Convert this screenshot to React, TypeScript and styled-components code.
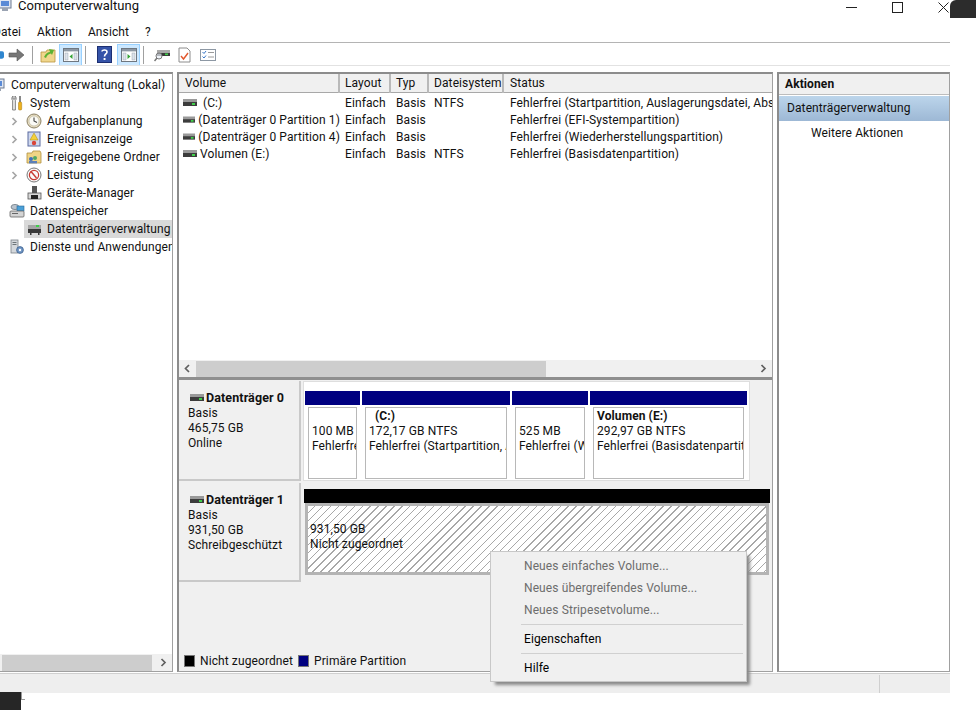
import React from "react";
import styled, { createGlobalStyle } from "styled-components";

const GlobalStyle = createGlobalStyle`
  html, body {
    margin: 0;
    padding: 0;
    width: 976px;
    height: 710px;
    overflow: hidden;
    background: #fff;
  }
  body {
    font-family: Roboto, "Noto Sans", "Liberation Sans", sans-serif;
    font-size: 12px;
    color: #111;
    letter-spacing: 0.1px;
  }
`;

const Page = styled.div`
  position: relative;
  width: 976px;
  height: 710px;
  overflow: hidden;
`;

/* window is a bit off-screen on the left and on the top */
const Shell = styled.div`
  width: 958px;
  margin-left: -8px;
  margin-top: -8px;
  display: flex;
  flex-direction: column;
`;

const TitleBar = styled.div`
  height: 30px;
  display: flex;
  align-items: center;
  padding-left: 5px;
  font-size: 13px;
  letter-spacing: 0;
  padding-bottom: 4px;
  box-sizing: border-box;
`;

const TitleText = styled.span`
  margin-left: 5px;
  flex: 1;
`;

const WinControls = styled.div`
  display: flex;
  gap: 35px;
  padding-right: 1px;
  margin-top: 4px;
`;

const MenuBar = styled.div`
  height: 21px;
  box-sizing: border-box;
  border-bottom: 1px solid #b4b4b4;
  display: flex;
  gap: 16px;
  align-items: center;
  padding-left: 1px;
`;

const Toolbar = styled.div`
  height: 22px;
  padding: 1px 0 0 0;
  box-sizing: border-box;
  display: flex;
  align-items: center;
  border-bottom: 0;
`;

const ToolBtn = styled.div<{ $active?: boolean; $w?: number }>`
  width: ${(p) => p.$w ?? 23}px;
  height: 22px;
  box-sizing: border-box;
  display: flex;
  align-items: center;
  justify-content: center;
  background: ${(p) => (p.$active ? "#cce8ff" : "transparent")};
  border: 1px solid ${(p) => (p.$active ? "#99d1ff" : "transparent")};
`;

const ToolSep = styled.div`
  width: 1px;
  height: 18px;
  background: #a0a0a0;
  margin: 0 3px;
`;

const ToolGap = styled.div<{ $w: number }>`
  width: ${(p) => p.$w}px;
`;

const Spacer = styled.div`
  height: 7px;
  border-top: 1px solid #e2e2e2;
  box-sizing: border-box;
`;

const Main = styled.div`
  height: 600px;
  display: grid;
  grid-template-columns: 181px 596px 173px;
  column-gap: 4px;
`;

const Pane = styled.div`
  box-sizing: border-box;
  border-top: 2px solid #8c8c8c;
  border-left: 2px solid #8c8c8c;
  border-right: 1px solid #a0a0a0;
  border-bottom: 1px solid #a0a0a0;
  overflow: hidden;
  min-width: 0;
  position: relative;
  display: flex;
  flex-direction: column;
`;

const TreeList = styled.div`
  flex: 1;
  padding-top: 2px;
  min-height: 0;
`;

const TreeRow = styled.div<{ $indent: number }>`
  height: 18px;
  display: flex;
  align-items: center;
  margin-left: ${(p) => p.$indent}px;
  white-space: nowrap;
`;

const Twisty = styled.div`
  width: 30px;
  flex: none;
  padding-left: 17px;
  box-sizing: border-box;
  display: flex;
  align-items: center;
`;

const TreeBody = styled.div<{ $selected?: boolean }>`
  flex: 1;
  height: 18px;
  display: flex;
  align-items: center;
  gap: 3px;
  background: ${(p) => (p.$selected ? "#d9d9d9" : "transparent")};
`;

const IconSlot = styled.span`
  width: 20px;
  flex: none;
  display: flex;
  justify-content: center;
`;

const HScroll = styled.div`
  height: 17px;
  flex: none;
  background: #f0f0f0;
  display: flex;
  align-items: center;
`;

const ScrollArrow = styled.div`
  width: 17px;
  height: 17px;
  flex: none;
  display: flex;
  align-items: center;
  justify-content: center;
`;

const ScrollTrack = styled.div`
  flex: 1;
  height: 16px;
  display: flex;
`;

const ScrollThumb = styled.div<{ $w: number; $off?: number }>`
  width: ${(p) => p.$w}px;
  margin-left: ${(p) => p.$off ?? 0}px;
  background: #cdcdcd;
`;

const ListArea = styled.div`
  height: 303px;
  flex: none;
  display: flex;
  flex-direction: column;
  background: #fff;
  border-bottom: 3px solid #8f8f8f;
  box-sizing: content-box;
`;

const COLUMNS = "161px 51px 38px 75px 1fr";

const ListHead = styled.div`
  display: grid;
  grid-template-columns: ${COLUMNS};
  height: 18px;
  flex: none;
  background: #f0f0f0;
  border-bottom: 1px solid #a8a8a8;
  box-sizing: content-box;
`;

const HeadCell = styled.div`
  padding-left: 5px;
  line-height: 19px;
  border-right: 2px solid #b9b9b9;
  box-sizing: border-box;
  &:first-child {
    padding-left: 6px;
  }
  &:last-child {
    border-right: 0;
    padding-left: 6px;
  }
`;

const ListBody = styled.div`
  flex: 1;
  padding-top: 1px;
`;

const ListRow = styled.div`
  display: grid;
  grid-template-columns: ${COLUMNS};
  height: 17px;
  align-items: center;
`;

const Cell = styled.div`
  padding-left: 5px;
  white-space: nowrap;
  overflow: hidden;
  &:last-child {
    padding-left: 6px;
  }
`;

const VolumeCell = styled.div<{ $gap: number }>`
  padding-left: 4px;
  display: flex;
  align-items: center;
  gap: ${(p) => p.$gap}px;
  white-space: nowrap;
`;

const DiskArea = styled.div`
  flex: 1;
  background: #f0f0f0;
  display: flex;
  flex-direction: column;
  min-height: 0;
`;

const DiskRows = styled.div`
  flex: 1;
  display: flex;
  flex-direction: column;
  gap: 2px;
  padding-top: 1px;
`;

const DiskRow = styled.div<{ $h: number }>`
  height: ${(p) => p.$h}px;
  display: flex;
  flex: none;
`;

const DiskLabel = styled.div`
  width: 122px;
  flex: none;
  box-sizing: border-box;
  padding: 9px 0 0 9px;
  line-height: 15px;
  background: #f0f0f0;
  border-right: 2px solid #c9c9c9;
  border-bottom: 2px solid #c9c9c9;
`;

const DiskName = styled.div`
  font-weight: 700;
  font-size: 12.5px;
  display: flex;
  align-items: center;
  gap: 2px;
  margin-left: 2px;
  height: 15px;
  margin-bottom: 1px;
`;

const DiskTrack = styled.div`
  width: 447px;
  flex: none;
  margin-left: 2px;
  box-sizing: border-box;
  padding: 9px 3px 0 1px;
  background: #fff;
  border: 1px solid #dedede;
  display: flex;
  gap: 2px;
`;

const PartCol = styled.div<{ $w: number }>`
  width: ${(p) => p.$w}px;
  flex: none;
  display: flex;
  flex-direction: column;
`;

const PartHead = styled.div<{ $color: string }>`
  height: 14px;
  flex: none;
  background: ${(p) => p.$color};
`;

const PartBox = styled.div`
  flex: 1;
  margin: 2px 3px 1px 3px;
  border: 1px solid #b8b8b8;
  padding: 1px 3px 0 3px;
  line-height: 15px;
  white-space: nowrap;
  overflow: hidden;
`;

const PartTitle = styled.div<{ $indent?: number }>`
  font-weight: 700;
  height: 15px;
  padding-left: ${(p) => p.$indent ?? 0}px;
`;

const EmptyTrack = styled.div`
  width: 466px;
  flex: none;
  margin-left: 3px;
  padding-top: 6px;
  display: flex;
  flex-direction: column;
`;

const HatchBox = styled.div`
  height: 72px;
  box-sizing: border-box;
  margin: 0 1px;
  border: 3px solid #b4b4b4;
  padding: 16px 0 0 2px;
  line-height: 15px;
  background: repeating-linear-gradient(
    135deg,
    #fff 0,
    #fff 4.6px,
    #a8a8a8 4.6px,
    #a8a8a8 5.6px
  );
`;

const Legend = styled.div`
  height: 18px;
  flex: none;
  display: flex;
  align-items: center;
  padding-left: 5px;
  margin-bottom: 1px;
`;

const LegendSwatch = styled.span<{ $color: string }>`
  width: 11px;
  height: 12px;
  background: ${(p) => p.$color};
  border: 1px solid #777;
  box-sizing: border-box;
  margin-right: 5px;
`;

const LegendText = styled.span`
  margin-right: 5px;
`;

const ActionHead = styled.div`
  height: 20px;
  line-height: 21px;
  padding-left: 6px;
  font-weight: 700;
  background: #f0f0f0;
  border-bottom: 1px solid #bdbdbd;
  flex: none;
`;

const ActionTitle = styled.div`
  height: 25px;
  line-height: 25px;
  padding-left: 8px;
  margin-top: 1px;
  background: linear-gradient(#bcd5eb, #9db8d5);
  flex: none;
`;

const ActionItem = styled.div`
  padding-left: 32px;
  line-height: 24px;
`;

const StatusBar = styled.div`
  height: 20px;
  background: #eeeeee;
  border-top: 1px solid #cfcfcf;
  box-sizing: border-box;
  margin-top: 1px;
  display: flex;
  justify-content: flex-end;
`;

const StatusCell = styled.div`
  width: 70px;
  margin-top: 1px;
  border-left: 1px solid #cfcfcf;
`;

const ContextMenu = styled.div`
  position: absolute;
  left: 490px;
  top: 551px;
  width: 257px;
  height: 131px;
  box-sizing: border-box;
  padding-top: 3px;
  background: #f0f0f0;
  border: 1px solid #c8c8c8;
  box-shadow: 4px 4px 3px -1px #8a8a8a;
`;

const MenuEntry = styled.div<{ $disabled?: boolean }>`
  height: 22px;
  line-height: 22px;
  padding-left: 33px;
  color: ${(p) => (p.$disabled ? "#6d6d6d" : "#000")};
`;

const MenuSep = styled.div`
  height: 1px;
  background: #d0d0d0;
  margin: 3px 3px 3px 30px;
`;

const DarkCorner = styled.div`
  position: absolute;
  right: 0;
  top: 0;
  width: 26px;
  height: 18px;
  background: #2c2c2c;
  border-top-left-radius: 6px;
`;

const DarkStub = styled.div`
  position: absolute;
  left: 0;
  bottom: 0;
  width: 21px;
  height: 18px;
  background: #262626;
  &::after {
    content: "";
    position: absolute;
    left: 21px;
    top: 0;
    width: 4px;
    height: 8px;
    border-left: 1px solid #999;
    border-bottom: 1px solid #999;
    box-sizing: border-box;
  }
`;

/* ---- drawn icons ---- */

const DriveIcon = ({ w = 14 }: { w?: number }) => (
  <svg width={w} height="8" viewBox="0 0 14 8">
    <rect x="0" y="0" width="14" height="3" fill="#9a9a9a" />
    <rect x="0" y="3" width="14" height="4" fill="#3c3c3c" />
    <rect x="9" y="4" width="3" height="2" fill="#3fd04a" />
  </svg>
);

const Chevron = ({ right = true, color = "#8a8a8a" }: { right?: boolean; color?: string }) => (
  <svg width="7" height="9" viewBox="0 0 7 9">
    <path
      d={right ? "M1.5 1 L5 4.5 L1.5 8" : "M5 1 L1.5 4.5 L5 8"}
      fill="none"
      stroke={color}
      strokeWidth="1.7"
    />
  </svg>
);

const ComputerIcon = () => (
  <svg width="16" height="16" viewBox="0 0 16 16">
    <rect x="2" y="2" width="12" height="9" fill="#dfe6f2" stroke="#6d7a90" />
    <rect x="4" y="4" width="8" height="5" fill="#5a8ad6" />
    <rect x="5" y="11" width="6" height="3" fill="#9aa3b2" />
  </svg>
);

const ToolsIcon = () => (
  <svg width="16" height="16" viewBox="0 0 16 16">
    <path d="M4 1 L4 4 L6 4 L6 1 C8 3 7 5 6.4 5.6 L6.4 15 L3.6 15 L3.6 5.6 C3 5 2 3 4 1Z" fill="#e8e8e8" stroke="#6b6b6b" strokeWidth="0.8" />
    <rect x="10" y="1" width="2" height="6" fill="#888" />
    <rect x="9.5" y="7" width="3.2" height="8" rx="1" fill="#eeb21f" stroke="#a87a10" strokeWidth="0.5" />
  </svg>
);

const ClockIcon = () => (
  <svg width="16" height="16" viewBox="0 0 16 16">
    <circle cx="8" cy="8" r="7" fill="#e6dcc0" stroke="#8c8266" />
    <circle cx="8" cy="8" r="5" fill="#fbfbf6" stroke="#b9b299" strokeWidth="0.6" />
    <path d="M8 4.5 L8 8 L11 9.5" fill="none" stroke="#444" strokeWidth="1.1" />
  </svg>
);

const LogIcon = () => (
  <svg width="16" height="16" viewBox="0 0 16 16">
    <rect x="2" y="1" width="12" height="14" fill="#cfd8ee" stroke="#5b6aa0" />
    <path d="M8 2 L12 9 L4 9Z" fill="#f4d03a" stroke="#a98a10" strokeWidth="0.5" />
    <circle cx="8" cy="12" r="2.2" fill="#d9453a" />
  </svg>
);

const SharedIcon = () => (
  <svg width="16" height="16" viewBox="0 0 16 16">
    <path d="M1 4 L6 4 L7 2 L14 2 L15 4 L15 14 L1 14Z" fill="#f0d486" stroke="#b09040" strokeWidth="0.8" />
    <circle cx="5" cy="10" r="2" fill="#3f6fc0" />
    <circle cx="9" cy="9" r="2" fill="#4fa866" />
    <rect x="3" y="12" width="8" height="2.4" fill="#5b7fb8" />
  </svg>
);

const GaugeIcon = () => (
  <svg width="16" height="16" viewBox="0 0 16 16">
    <circle cx="8" cy="8" r="7" fill="#fafafa" stroke="#777" />
    <circle cx="8" cy="8" r="4.6" fill="none" stroke="#c83a32" strokeWidth="1.2" />
    <path d="M5 4.5 L10.5 11" stroke="#c83a32" strokeWidth="1.4" />
  </svg>
);

const DeviceIcon = () => (
  <svg width="16" height="16" viewBox="0 0 16 16">
    <rect x="6" y="1" width="5" height="7" fill="#555" />
    <rect x="2" y="8" width="13" height="6" fill="#d8d8d8" stroke="#555" strokeWidth="0.8" />
    <rect x="5" y="10" width="7" height="4" fill="#222" />
  </svg>
);

const StorageIcon = () => (
  <svg width="16" height="16" viewBox="0 0 16 16">
    <ellipse cx="6" cy="4" rx="4" ry="2.6" fill="#b9c2cc" stroke="#5f6b75" strokeWidth="0.7" />
    <rect x="8" y="3" width="7" height="5" fill="#4aa0d8" stroke="#2b6a98" strokeWidth="0.6" />
    <rect x="1" y="8" width="14" height="6" rx="1" fill="#d4d4d4" stroke="#666" strokeWidth="0.8" />
    <rect x="3" y="10" width="6" height="1" fill="#666" />
  </svg>
);

const DiskToolIcon = () => (
  <svg width="16" height="16" viewBox="0 0 16 16">
    <rect x="2" y="4" width="13" height="4" fill="#a5a5a5" />
    <rect x="2" y="8" width="13" height="4" fill="#3a3a3a" />
    <rect x="10" y="4" width="3" height="2" fill="#3fd04a" />
    <rect x="4" y="12" width="1.5" height="2" fill="#3a3a3a" />
    <rect x="12" y="12" width="1.5" height="2" fill="#3a3a3a" />
  </svg>
);

const ServicesIcon = () => (
  <svg width="16" height="16" viewBox="0 0 16 16">
    <rect x="2" y="1" width="7" height="13" fill="#d4d8dc" stroke="#7b8288" strokeWidth="0.8" />
    <rect x="3.5" y="3" width="4" height="1" fill="#6c7478" />
    <rect x="3.5" y="5" width="4" height="1" fill="#6c7478" />
    <circle cx="11" cy="11" r="3.4" fill="#6f95c4" stroke="#3f628e" strokeWidth="0.8" />
    <circle cx="11" cy="11" r="1.2" fill="#fff" />
  </svg>
);

const BackIcon = () => (
  <svg width="17" height="14" viewBox="0 0 17 14">
    <path d="M1 5 L9 5 L9 1 L16 7 L9 13 L9 9 L1 9Z" fill="#777" stroke="#555" strokeWidth="0.6" />
  </svg>
);

const UpFolderIcon = () => (
  <svg width="16" height="16" viewBox="0 0 16 16">
    <path d="M1 5 L6 5 L7 3 L15 3 L15 15 L1 15Z" fill="#f0d68c" stroke="#b9963f" strokeWidth="0.8" />
    <path d="M4 10 C6 6 8 5 10 5 L9 2 L14 3 L12 8 L11 6.5 C9 7 7 8 6 11Z" fill="#5cb233" />
  </svg>
);

const PanelIcon = ({ side }: { side: "left" | "right" }) => (
  <svg width="16" height="14" viewBox="0 0 16 14">
    <rect x="0.5" y="0.5" width="15" height="13" fill="#fff" stroke="#6f7780" />
    <rect x="1" y="1" width="14" height="2.4" fill="#8d98a4" />
    <rect x="2" y="5" width="3" height="7" fill="#dde3ea" stroke="#8d98a4" strokeWidth="0.4" />
    <rect x="11" y="5" width="3" height="7" fill="#dde3ea" stroke="#8d98a4" strokeWidth="0.4" />
    <path
      d={side === "left" ? "M9.5 6 L6.5 8.5 L9.5 11Z" : "M6.5 6 L9.5 8.5 L6.5 11Z"}
      fill="#36a336"
    />
  </svg>
);

const HelpIcon = () => (
  <svg width="15" height="17" viewBox="0 0 15 17">
    <rect x="0.5" y="0.5" width="14" height="16" fill="#3553a8" stroke="#1c2f72" />
    <path d="M5 5.5 C5 3.5 10 3.5 10 6 C10 8 7.5 8 7.5 10.5" fill="none" stroke="#fff" strokeWidth="1.6" />
    <rect x="6.6" y="12" width="1.9" height="2" fill="#fff" />
  </svg>
);

const ScanIcon = () => (
  <svg width="16" height="15" viewBox="0 0 16 15">
    <rect x="3" y="3" width="13" height="3" fill="#a8a8a8" />
    <rect x="3" y="6" width="13" height="3" fill="#3a3a3a" />
    <rect x="11" y="6.5" width="3" height="1.6" fill="#3fd04a" />
    <circle cx="5" cy="9" r="3" fill="#e8eef6" fillOpacity="0.7" stroke="#777" />
    <path d="M3 11 L0.5 14" stroke="#777" strokeWidth="1.5" />
  </svg>
);

const CheckDocIcon = () => (
  <svg width="13" height="16" viewBox="0 0 13 16">
    <path d="M1 1 L9 1 L12 4 L12 15 L1 15Z" fill="#fff" stroke="#8c8c8c" />
    <path d="M3 9 L5.5 12 L10 6" fill="none" stroke="#e2572c" strokeWidth="1.4" />
  </svg>
);

const ChecklistIcon = () => (
  <svg width="16" height="12" viewBox="0 0 16 12">
    <rect x="0.5" y="0.5" width="15" height="11" fill="#fff" stroke="#8d98a4" />
    <path d="M2.5 3 L4 4.5 L6 2" fill="none" stroke="#3a78c8" strokeWidth="1" />
    <path d="M2.5 7.5 L4 9 L6 6.5" fill="none" stroke="#3a78c8" strokeWidth="1" />
    <path d="M8 3.5 L14 3.5 M8 8 L14 8" stroke="#9a9a9a" />
  </svg>
);

/* ---- data ---- */

type TreeEntry = {
  label: string;
  indent: number;
  icon: React.ReactNode;
  twisty?: "arrow" | "blank";
  selected?: boolean;
};

const treeEntries: TreeEntry[] = [
  { label: "Computerverwaltung (Lokal)", indent: -6, icon: <ComputerIcon /> },
  { label: "System", indent: 13, icon: <ToolsIcon /> },
  { label: "Aufgabenplanung", indent: 0, icon: <ClockIcon />, twisty: "arrow" },
  { label: "Ereignisanzeige", indent: 0, icon: <LogIcon />, twisty: "arrow" },
  { label: "Freigegebene Ordner", indent: 0, icon: <SharedIcon />, twisty: "arrow" },
  { label: "Leistung", indent: 0, icon: <GaugeIcon />, twisty: "arrow" },
  { label: "Geräte-Manager", indent: 0, icon: <DeviceIcon />, twisty: "blank" },
  { label: "Datenspeicher", indent: 13, icon: <StorageIcon /> },
  { label: "Datenträgerverwaltung", indent: 0, icon: <DiskToolIcon />, twisty: "blank", selected: true },
  { label: "Dienste und Anwendungen", indent: 13, icon: <ServicesIcon /> },
];

const volumes = [
  { name: "(C:)", gap: 6, fs: "NTFS", status: "Fehlerfrei (Startpartition, Auslagerungsdatei, Absturzabbild)" },
  { name: "(Datenträger 0 Partition 1)", gap: 3, fs: "", status: "Fehlerfrei (EFI-Systempartition)" },
  { name: "(Datenträger 0 Partition 4)", gap: 3, fs: "", status: "Fehlerfrei (Wiederherstellungspartition)" },
  { name: "Volumen (E:)", gap: 3, fs: "NTFS", status: "Fehlerfrei (Basisdatenpartition)" },
];

const partitions = [
  { w: 55, title: "", indent: 0, size: "100 MB", state: "Fehlerfrei (EFI-Systempartition)" },
  { w: 148, title: "(C:)", indent: 6, size: "172,17 GB NTFS", state: "Fehlerfrei (Startpartition, Auslagerungsdatei)" },
  { w: 76, title: "", indent: 0, size: "525 MB", state: "Fehlerfrei (Wiederherstellung)" },
  { w: 157, title: "Volumen  (E:)", indent: 0, size: "292,97 GB NTFS", state: "Fehlerfrei (Basisdatenpartition)" },
];

const App = () => {
  return (
    <Page>
      <GlobalStyle />
      <Shell>
        <TitleBar>
          <ComputerIcon />
          <TitleText>Computerverwaltung</TitleText>
          <WinControls>
            <svg width="11" height="11" viewBox="0 0 11 11">
              <path d="M0 5.5 L11 5.5" stroke="#222" />
            </svg>
            <svg width="11" height="11" viewBox="0 0 11 11">
              <rect x="0.5" y="0.5" width="10" height="10" fill="none" stroke="#222" />
            </svg>
            <svg width="11" height="11" viewBox="0 0 11 11">
              <path d="M0.5 0.5 L10.5 10.5 M10.5 0.5 L0.5 10.5" stroke="#222" />
            </svg>
          </WinControls>
        </TitleBar>

        <MenuBar>
          <span>Datei</span>
          <span>Aktion</span>
          <span>Ansicht</span>
          <span>?</span>
        </MenuBar>

        <Toolbar>
          <ToolBtn $w={13}>
            <svg width="12" height="8" viewBox="0 0 12 8">
              <rect width="12" height="8" rx="2" fill="#2f86cf" />
            </svg>
          </ToolBtn>
          <ToolBtn $w={22}>
            <BackIcon />
          </ToolBtn>
          <ToolGap $w={2} />
          <ToolSep />
          <ToolBtn>
            <UpFolderIcon />
          </ToolBtn>
          <ToolBtn $active>
            <PanelIcon side="left" />
          </ToolBtn>
          <ToolSep />
          <ToolGap $w={4} />
          <ToolBtn>
            <HelpIcon />
          </ToolBtn>
          <ToolGap $w={1} />
          <ToolBtn $active>
            <PanelIcon side="right" />
          </ToolBtn>
          <ToolSep />
          <ToolGap $w={3} />
          <ToolBtn>
            <ScanIcon />
          </ToolBtn>
          <ToolBtn>
            <CheckDocIcon />
          </ToolBtn>
          <ToolBtn>
            <ChecklistIcon />
          </ToolBtn>
        </Toolbar>

        <Spacer />

        <Main>
          <Pane>
            <TreeList>
              {treeEntries.map((e) => (
                <TreeRow key={e.label} $indent={e.indent}>
                  {e.twisty && <Twisty>{e.twisty === "arrow" && <Chevron color="#a6a6a6" />}</Twisty>}
                  <TreeBody $selected={e.selected}>
                    <IconSlot>{e.icon}</IconSlot>
                    <span>{e.label}</span>
                  </TreeBody>
                </TreeRow>
              ))}
            </TreeList>
            <HScroll>
              <ScrollTrack>
                <ScrollThumb $w={150} $off={8} />
              </ScrollTrack>
              <ScrollArrow>
                <Chevron color="#606060" />
              </ScrollArrow>
            </HScroll>
          </Pane>

          <Pane>
            <ListArea>
              <ListHead>
                <HeadCell>Volume</HeadCell>
                <HeadCell>Layout</HeadCell>
                <HeadCell>Typ</HeadCell>
                <HeadCell>Dateisystem</HeadCell>
                <HeadCell>Status</HeadCell>
              </ListHead>
              <ListBody>
                {volumes.map((v) => (
                  <ListRow key={v.name}>
                    <VolumeCell $gap={v.gap}>
                      <DriveIcon />
                      <span>{v.name}</span>
                    </VolumeCell>
                    <Cell>Einfach</Cell>
                    <Cell>Basis</Cell>
                    <Cell>{v.fs}</Cell>
                    <Cell>{v.status}</Cell>
                  </ListRow>
                ))}
              </ListBody>
              <HScroll>
                <ScrollArrow>
                  <Chevron right={false} color="#606060" />
                </ScrollArrow>
                <ScrollTrack>
                  <ScrollThumb $w={350} />
                </ScrollTrack>
                <ScrollArrow>
                  <Chevron color="#606060" />
                </ScrollArrow>
              </HScroll>
            </ListArea>

            <DiskArea>
              <DiskRows>
                <DiskRow $h={100}>
                  <DiskLabel>
                    <DiskName>
                      <DriveIcon />
                      Datenträger 0
                    </DiskName>
                    <div>Basis</div>
                    <div>465,75 GB</div>
                    <div>Online</div>
                  </DiskLabel>
                  <DiskTrack>
                    {partitions.map((p) => (
                      <PartCol key={p.size} $w={p.w}>
                        <PartHead $color="#000080" />
                        <PartBox>
                          <PartTitle $indent={p.indent}>{p.title}</PartTitle>
                          <div>{p.size}</div>
                          <div>{p.state}</div>
                        </PartBox>
                      </PartCol>
                    ))}
                  </DiskTrack>
                </DiskRow>
                <DiskRow $h={99}>
                  <DiskLabel>
                    <DiskName>
                      <DriveIcon />
                      Datenträger 1
                    </DiskName>
                    <div>Basis</div>
                    <div>931,50 GB</div>
                    <div>Schreibgeschützt</div>
                  </DiskLabel>
                  <EmptyTrack>
                    <PartHead $color="#000" />
                    <HatchBox>
                      <div>931,50 GB</div>
                      <div>Nicht zugeordnet</div>
                    </HatchBox>
                  </EmptyTrack>
                </DiskRow>
              </DiskRows>
              <Legend>
                <LegendSwatch $color="#000" />
                <LegendText>Nicht zugeordnet</LegendText>
                <LegendSwatch $color="#000080" />
                <LegendText>Primäre Partition</LegendText>
              </Legend>
            </DiskArea>
          </Pane>

          <Pane>
            <ActionHead>Aktionen</ActionHead>
            <ActionTitle>Datenträgerverwaltung</ActionTitle>
            <ActionItem>Weitere Aktionen</ActionItem>
          </Pane>
        </Main>

        <StatusBar>
          <StatusCell />
        </StatusBar>
      </Shell>

      <ContextMenu>
        <MenuEntry $disabled>Neues einfaches Volume...</MenuEntry>
        <MenuEntry $disabled>Neues übergreifendes Volume...</MenuEntry>
        <MenuEntry $disabled>Neues Stripesetvolume...</MenuEntry>
        <MenuSep />
        <MenuEntry>Eigenschaften</MenuEntry>
        <MenuSep />
        <MenuEntry>Hilfe</MenuEntry>
      </ContextMenu>

      <DarkCorner />
      <DarkStub />
    </Page>
  );
};

export default App;
